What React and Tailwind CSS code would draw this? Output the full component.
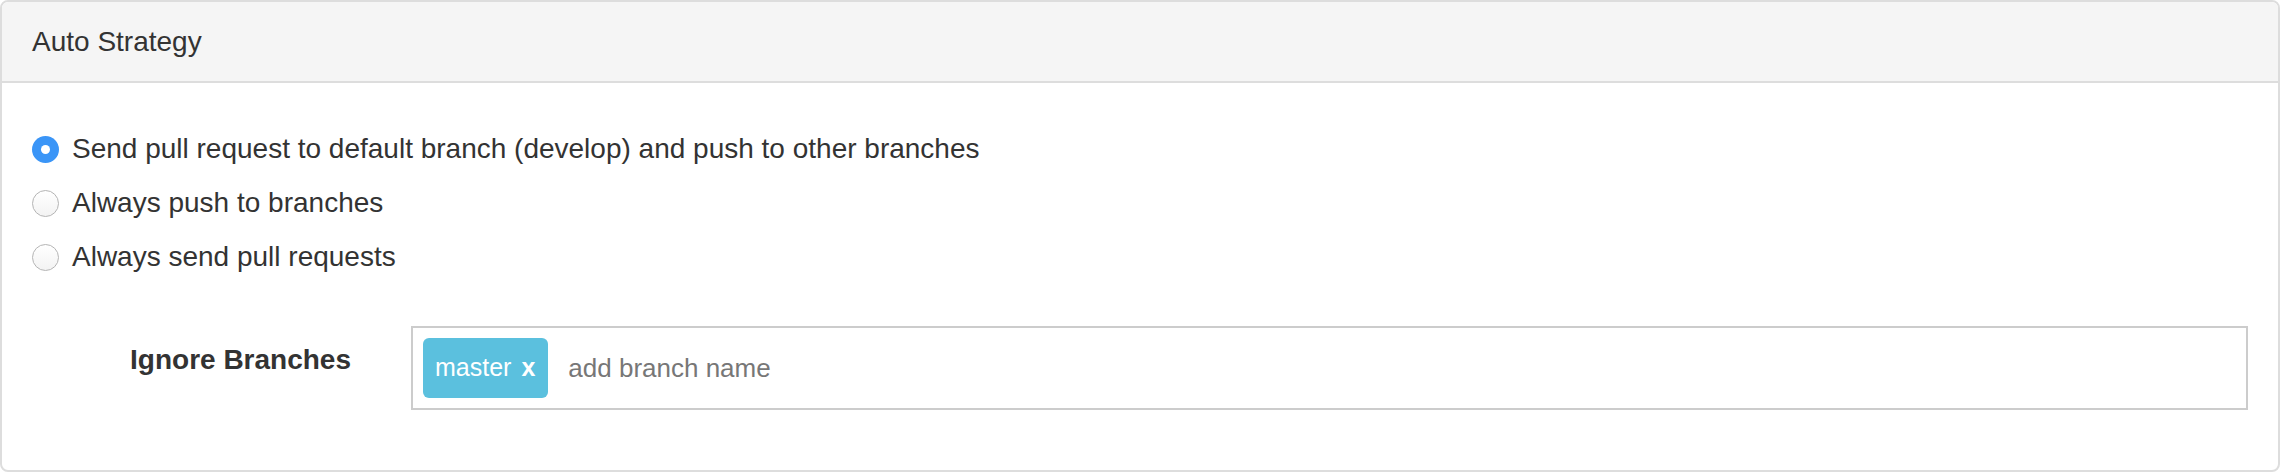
import { useState } from 'react';

const OPTIONS = [
  { id: 'pr-default', label: 'Send pull request to default branch (develop) and push to other branches' },
  { id: 'push', label: 'Always push to branches' },
  { id: 'pr', label: 'Always send pull requests' },
];

const Radio = ({ checked }) =>
  checked ? (
    <span className="w-[27px] h-[27px] rounded-full bg-[#3a95f7] flex items-center justify-center shrink-0">
      <span className="w-[9px] h-[9px] rounded-full bg-white" />
    </span>
  ) : (
    <span className="w-[27px] h-[27px] rounded-full border-[1.5px] border-[#b4b4b4] bg-gradient-to-b from-white to-[#f3f3f3] shrink-0" />
  );

const App = () => {
  const [strategy, setStrategy] = useState('pr-default');
  const [branches] = useState(['master']);

  return (
    <div className="w-[2280px] h-[472px] bg-white font-['Liberation_Sans',Arial,sans-serif] text-[#333]">
      <div className="border-2 border-[#ddd] rounded-[8px] overflow-hidden">
        {/* Header */}
        <div className="bg-[#f5f5f5] border-b-2 border-[#ddd] pl-[30px] pt-[20px] pb-[19px]">
          <h3 className="text-[28px] leading-[40px]">Auto Strategy</h3>
        </div>

        {/* Body */}
        <div className="px-[30px] pt-[46px] pb-[60px]">
          <div className="flex flex-col gap-[14px]">
            {OPTIONS.map((opt) => (
              <label
                key={opt.id}
                className="flex items-center h-[40px] cursor-pointer"
                onClick={() => setStrategy(opt.id)}
              >
                <Radio checked={strategy === opt.id} />
                <span className="ml-[13px] text-[28px] leading-[40px]">{opt.label}</span>
              </label>
            ))}
          </div>

          <div className="flex mt-[49px] -ml-[30px]">
            <div className="w-[379px] shrink-0 pr-[30px] pt-[14px] text-right">
              <span className="text-[28px] leading-[40px] font-bold">Ignore Branches</span>
            </div>
            <div className="flex-1 pl-[30px]">
              <div className="flex items-center border-2 border-[#ccc] p-[10px] h-[84px]">
                {branches.map((b) => (
                  <span
                    key={b}
                    className="flex items-center h-[60px] pl-[12px] pr-[13px] rounded-[6px] bg-[#5bc0de] text-white text-[25px]"
                  >
                    {b}
                    <span className="ml-[10px] font-bold">x</span>
                  </span>
                ))}
                <span className="ml-[20px] text-[26px] text-[#777]">add branch name</span>
              </div>
            </div>
          </div>
        </div>
      </div>
    </div>
  );
};

export default App;
